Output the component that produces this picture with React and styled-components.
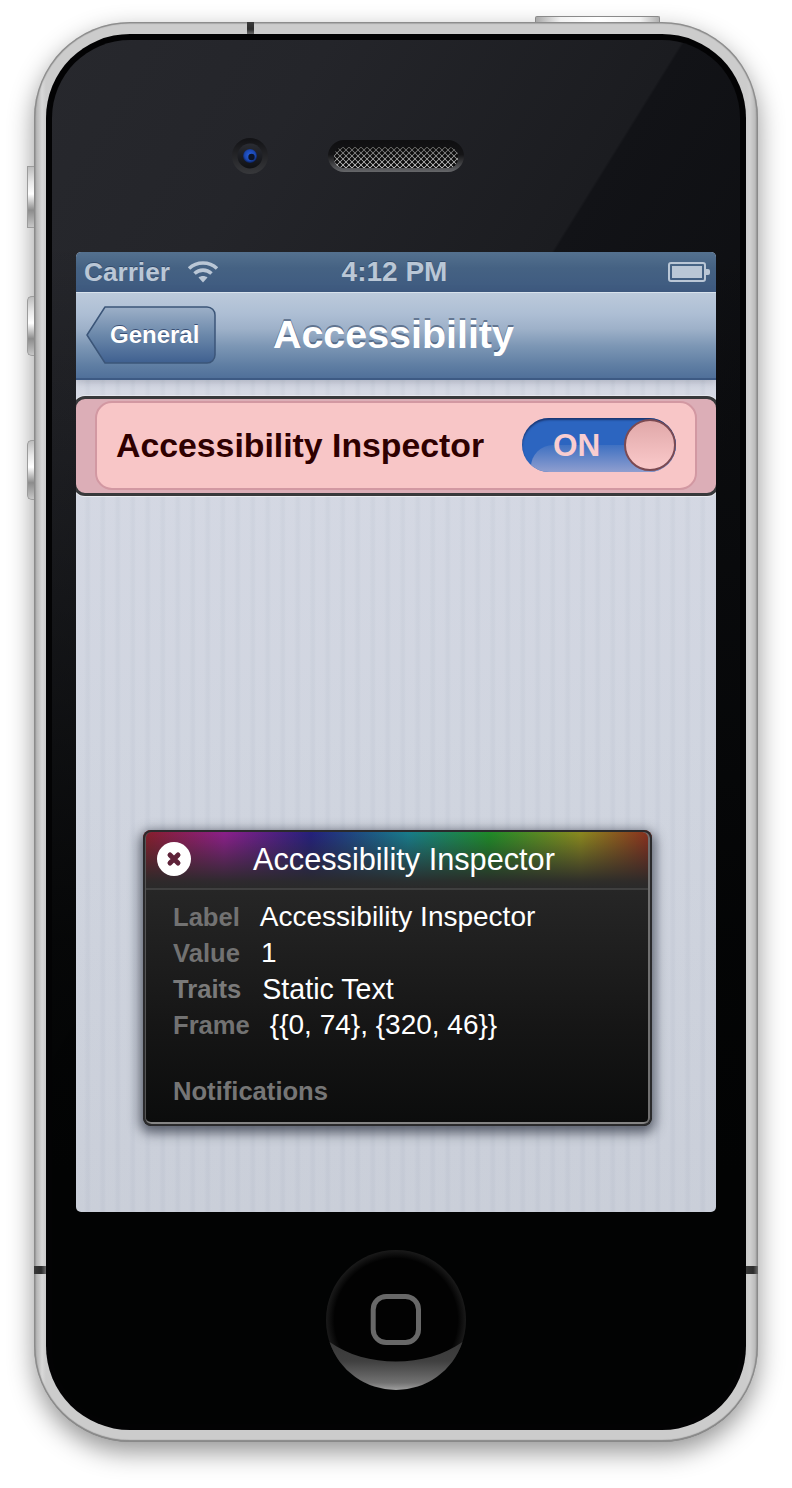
import React from "react";
import styled, { createGlobalStyle } from "styled-components";

const Global = createGlobalStyle`
  html, body { margin: 0; padding: 0; background: #fff; }
  body { font-family: "Liberation Sans", Arial, sans-serif; }
  #root { width: 792px; height: 1488px; overflow: hidden; }
`;

const Page = styled.div`
  width: 792px;
  height: 1488px;
  padding: 22px 34px 46px;
  box-sizing: border-box;
  background: #fff;
`;

const Body = styled.div`
  position: relative;
  width: 724px;
  height: 1420px;
  box-sizing: border-box;
  padding: 12px;
  border-radius: 96px;
  background: linear-gradient(90deg, #a8a8a8 0, #c4c4c4 5px, #d8d8d8 8px, #cccccc 12px, #cccccc 712px, #d0d0d0 716px, #bcbcbc 721px, #a0a0a0 724px);
  box-shadow: 0 10px 26px rgba(0, 0, 0, 0.42), inset 0 0 1px 1.5px #8a8a8a, inset 0 -2px 1px #8c8c8c;
`;

const Band = styled.div`
  position: absolute;
  background: linear-gradient(${(p) => (p.$v ? "90deg" : "180deg")}, #3a3a3a, #2c2c2c 60%, #6a6a6a);
  ${(p) => p.$css}
`;

const SideButton = styled.div`
  position: absolute;
  left: -7px;
  top: ${(p) => p.$top}px;
  width: 7px;
  height: ${(p) => p.$h}px;
  box-sizing: border-box;
  border: 1px solid #9c9c9c;
  border-right: none;
  border-radius: ${(p) => (p.$round ? "5px 0 0 5px" : "0")};
  background: linear-gradient(180deg, #bdbdbd 0, #e8e8e8 25%, #ffffff 45%, #8c8c8c 72%, #c6c6c6 100%);
`;

const TopButton = styled.div`
  position: absolute;
  top: -6px;
  left: 501px;
  width: 125px;
  height: 6px;
  box-sizing: border-box;
  border: 1px solid #8a8a8a;
  border-bottom: none;
  border-radius: 2px 2px 0 0;
  background: linear-gradient(90deg, #a8a8a8, #f2f2f2 20%, #ffffff 50%, #f0f0f0 85%, #b0b0b0);
`;

const Bezel = styled.div`
  width: 700px;
  height: 1396px;
  box-sizing: border-box;
  padding: 6px;
  border-radius: 84px;
  background: #030304;
`;

const Glass = styled.div`
  width: 688px;
  height: 1384px;
  border-radius: 78px;
  overflow: hidden;
  display: flex;
  flex-direction: column;
  background:
    linear-gradient(180deg, rgba(2, 3, 3, 0) 0, rgba(2, 3, 3, 0) 200px, rgba(2, 3, 3, 0.3) 480px, rgba(2, 3, 3, 0.85) 900px, #020303 1130px),
    linear-gradient(121.8deg, #27282d 0, #24252a 18%, #1b1c20 40.8%, #121317 41%, #0d0e11 60%);
`;

const TopZone = styled.div`
  height: 212px;
  box-sizing: border-box;
  padding: 98px 0 0 180px;
  display: flex;
  align-items: flex-start;
  gap: 60px;
`;

const Camera = styled.svg`
  display: block;
  width: 36px;
  height: 36px;
  flex: none;
`;

const Speaker = styled.div`
  width: 136px;
  height: 32px;
  margin-top: 2px;
  box-sizing: border-box;
  padding: 7px 6px 4px;
  border-radius: 16px;
  background: linear-gradient(180deg, #0f0f11 0, #141416 45%, #66676a 100%);
  flex: none;
`;

const Mesh = styled.div`
  height: 21px;
  border-radius: 9px;
  background-color: #9c9c9c;
  background-image:
    radial-gradient(circle at center, #0c0c0c 0, #0c0c0c 1.5px, transparent 2px),
    radial-gradient(circle at center, #0c0c0c 0, #0c0c0c 1.5px, transparent 2px),
    linear-gradient(180deg, #5c5c5c, #b8b8b8);
  background-size: 6px 6px, 6px 6px, 100% 100%;
  background-position: 0 0, 3px 3px, 0 0;
`;

const Screen = styled.div`
  width: 640px;
  height: 960px;
  margin-left: 24px;
  border-radius: 5px;
  overflow: hidden;
  display: flex;
  flex-direction: column;
  flex: none;
  background:
    repeating-linear-gradient(90deg, rgba(255,255,255,0.035) 0, rgba(255,255,255,0.035) 8px, rgba(120,130,150,0.045) 11px, rgba(120,130,150,0.045) 13px, rgba(255,255,255,0.035) 15px),
    linear-gradient(180deg, #d6dae5 0, #cfd4df 50%, #c8cdd8 100%);
`;

const StatusBar = styled.div`
  height: 40px;
  flex: none;
  display: grid;
  grid-template-columns: 1fr auto 1fr;
  align-items: center;
  padding: 0 6px 0 8px;
  color: #bac7d6;
  font-weight: 700;
  background: linear-gradient(180deg, #54718f 0, #456283 40%, #3e5a80 100%);
`;

const StatusLeft = styled.div`
  display: flex;
  align-items: center;
  gap: 17px;
`;

const StatusText = styled.span`
  font-size: ${(p) => p.$size}px;
  line-height: 40px;
  margin-right: ${(p) => p.$shift || 0}px;
  text-shadow: 0 -1px 0 rgba(30, 50, 80, 0.5);
`;

const StatusRight = styled.div`
  display: flex;
  justify-content: flex-end;
`;

const NavBar = styled.div`
  height: 88px;
  flex: none;
  box-sizing: border-box;
  padding-left: 10px;
  display: flex;
  align-items: center;
  gap: 57px;
  border-top: 1px solid #d8e2ec;
  border-bottom: 2px solid #3d5a84;
  background: linear-gradient(180deg, #bccadb 0, #adbed4 25%, #9eb1c9 42%, #7d97b5 62%, #5f7ea3 85%, #50709a 100%);
  box-shadow: 0 2px 8px rgba(60, 70, 90, 0.28);
`;

const BackButton = styled.div`
  position: relative;
  width: 130px;
  height: 58px;
  margin-top: -1px;
  flex: none;
  display: flex;
  align-items: center;
  padding-left: 24px;
  box-sizing: border-box;
  color: #fff;
  font-size: 24px;
  font-weight: 700;
`;

const BackShape = styled.svg`
  position: absolute;
  left: 0;
  top: 0;
  width: 130px;
  height: 58px;
`;

const BackLabel = styled.span`
  position: relative;
  text-shadow: 0 -1px 0 rgba(30, 50, 90, 0.7);
`;

const Title = styled.div`
  color: #fff;
  font-size: 39.4px;
  font-weight: 700;
  margin-top: -2px;
  text-shadow: 0 -2px 0 rgba(60, 80, 110, 0.65);
`;

const Content = styled.div`
  flex: 1;
  padding-top: 16px;
  position: relative;
`;

const Highlight = styled.div`
  height: 100px;
  box-sizing: border-box;
  border: 3px solid #38393b;
  border-radius: 12px;
  margin: 0 -3px;
  padding: 2px 19px 3px 19px;
  background: #dcaeb7;
  box-shadow: 0 1px 0 rgba(255, 255, 255, 0.55), 0 -1px 0 rgba(255, 255, 255, 0.4);
`;

const Cell = styled.div`
  height: 100%;
  box-sizing: border-box;
  border: 2px solid #d298a2;
  border-radius: 17px;
  display: flex;
  align-items: center;
  justify-content: space-between;
  padding: 0 19px;
  background: #f8c6c7;
`;

const CellLabel = styled.div`
  color: #2f0000;
  font-size: 33.8px;
  font-weight: 700;
`;

const Switch = styled.div`
  position: relative;
  width: 154px;
  height: 54px;
  margin-top: -1px;
  box-sizing: border-box;
  border-radius: 27px;
  overflow: hidden;
  display: flex;
  align-items: center;
  padding-left: 31px;
  background: #2c65c0;
  box-shadow: inset 0 2px 2px rgba(20, 40, 90, 0.75);
`;

const SwitchGloss = styled.div`
  position: absolute;
  left: 9px;
  right: 0;
  top: 27px;
  bottom: 0;
  border-radius: 22px 0 0 0;
  background: linear-gradient(180deg, #3f71c2, #8f9ecf);
`;

const SwitchText = styled.span`
  position: relative;
  color: #f9cdd0;
  font-size: 31.5px;
  font-weight: 700;
`;

const Knob = styled.div`
  position: absolute;
  right: 0;
  top: 1px;
  width: 52px;
  height: 52px;
  box-sizing: border-box;
  border: 2px solid #7b4a52;
  border-radius: 50%;
  background: linear-gradient(180deg, #e0a8a9 0, #f8c6c7 90%);
`;

const Inspector = styled.div`
  position: absolute;
  left: 67px;
  top: 450px;
  width: 509px;
  height: 296px;
  box-sizing: border-box;
  border-radius: 8px;
  overflow: hidden;
  background: linear-gradient(180deg, #2c2c2c 0, #262626 20%, #161616 65%, #0b0c0c 100%);
  box-shadow: 0 4px 12px 3px rgba(40, 45, 60, 0.7);

  &::after {
    content: "";
    position: absolute;
    inset: 0;
    box-sizing: border-box;
    border-radius: 8px;
    border: 2px solid #2a2a2c;
    box-shadow: inset 1px 0 0 #555, inset -2px 0 0 #707070, inset 0 -2px 0 #858585;
    pointer-events: none;
  }
`;

const InspectorHead = styled.div`
  height: 60px;
  box-sizing: border-box;
  display: flex;
  align-items: center;
  padding-left: 13px;
  gap: 61px;
  color: #fff;
  font-size: 30.7px;
  border-bottom: 2px solid #3f3f3f;
  background:
    linear-gradient(180deg, rgba(42, 42, 42, 0) 0, rgba(42, 42, 42, 0.2) 20%, rgba(42, 42, 42, 0.95) 88%, #2a2a2a 100%),
    linear-gradient(90deg, #8a1e28 0, #8f1f8e 16%, #24207f 33%, #177f8f 52%, #1e8e28 68%, #8f8c1e 86%, #8c2a1e 100%);
`;

const CloseIcon = styled.svg`
  display: block;
  width: 36px;
  height: 36px;
  flex: none;
`;

const HeadTitle = styled.span`
  margin-top: 2px;
`;

const InspectorBody = styled.div`
  padding: 9px 0 0 30px;
`;

const Row = styled.div`
  display: flex;
  align-items: center;
  gap: ${(p) => p.$gap}px;
  height: 36px;
`;

const Key = styled.span`
  color: ${(p) => p.$c || "#727272"};
  font-size: 25.6px;
  font-weight: 700;
`;

const Val = styled.span`
  color: #fff;
  font-size: ${(p) => p.$size || 28}px;
`;

const Notifications = styled.div`
  margin-top: 30px;
  height: 36px;
  line-height: 36px;
  color: #767676;
  font-size: 25.6px;
  font-weight: 700;
`;

const BottomZone = styled.div`
  flex: 1;
  display: flex;
  justify-content: center;
  padding-top: 38px;
`;

const Home = styled.svg`
  display: block;
  width: 140px;
  height: 140px;
`;

const Wifi = () => (
  <svg width="32" height="24" viewBox="0 0 32 24" style={{ display: "block" }}>
    <g fill="none" stroke="#bac7d6" strokeWidth="3.6">
      <path d="M2 8.5C10 1.2 22 1.2 30 8.5" />
      <path d="M7.5 13.5C12.5 9 19.5 9 24.5 13.5" />
    </g>
    <path d="M11.5 17.6C14 15.6 18 15.6 20.5 17.6L16 22.5Z" fill="#bac7d6" />
  </svg>
);

const Battery = () => (
  <svg width="42" height="20" viewBox="0 0 42 20" style={{ display: "block" }}>
    <rect x="1" y="1" width="36" height="18" rx="2" fill="none" stroke="#bac7d6" strokeWidth="2" />
    <rect x="4" y="4" width="30" height="12" fill="#bac7d6" />
    <path d="M38 7h2a2 2 0 0 1 2 2v2a2 2 0 0 1-2 2h-2Z" fill="#bac7d6" />
  </svg>
);

export default function App() {
  return (
    <Page>
      <Global />
      <Body>
        <TopButton />
        <SideButton $top={144} $h={62} />
        <SideButton $top={274} $h={60} $round />
        <SideButton $top={418} $h={60} $round />
        <Band $css="left:213px;top:0;width:7px;height:12px;" />
        <Band $v $css="left:0;top:1244px;width:12px;height:8px;" />
        <Band $v $css="right:0;top:1244px;width:12px;height:8px;" />
        <Bezel>
          <Glass>
            <TopZone>
              <Camera viewBox="0 0 36 36">
                <defs>
                  <linearGradient id="camRim" x1="0" y1="0" x2="0" y2="1">
                    <stop offset="0" stopColor="#121215" />
                    <stop offset="1" stopColor="#37383b" />
                  </linearGradient>
                  <linearGradient id="camCore" x1="0" y1="0" x2="0" y2="1">
                    <stop offset="0" stopColor="#2a2c33" />
                    <stop offset="1" stopColor="#101114" />
                  </linearGradient>
                  <radialGradient id="camLens" cx="0.5" cy="0.45" r="0.55">
                    <stop offset="0" stopColor="#2a62e0" />
                    <stop offset="0.7" stopColor="#1a46ae" />
                    <stop offset="1" stopColor="#0c1d50" />
                  </radialGradient>
                </defs>
                <circle cx="18" cy="18" r="18" fill="url(#camRim)" />
                <circle cx="18" cy="18" r="12.5" fill="url(#camCore)" />
                <circle cx="18" cy="18" r="7" fill="url(#camLens)" />
                <circle cx="19.5" cy="19" r="3.2" fill="#0b1428" />
              </Camera>
              <Speaker>
                <Mesh />
              </Speaker>
            </TopZone>
            <Screen>
              <StatusBar>
                <StatusLeft>
                  <StatusText $size={26.2}>Carrier</StatusText>
                  <Wifi />
                </StatusLeft>
                <StatusText $size={28} $shift={5}>4:12 PM</StatusText>
                <StatusRight>
                  <Battery />
                </StatusRight>
              </StatusBar>
              <NavBar>
                <BackButton>
                  <BackShape viewBox="0 0 130 58">
                    <defs>
                      <linearGradient id="backFill" x1="0" y1="0" x2="0" y2="1">
                        <stop offset="0" stopColor="#9db0c8" />
                        <stop offset="0.5" stopColor="#6b88aa" />
                        <stop offset="1" stopColor="#3f6090" />
                      </linearGradient>
                    </defs>
                    <path
                      d="M19 1H121a8 8 0 0 1 8 8V49a8 8 0 0 1-8 8H19L1 29Z"
                      fill="url(#backFill)"
                      stroke="#3b5578"
                      strokeWidth="1.5"
                      strokeLinejoin="round"
                    />
                  </BackShape>
                  <BackLabel>General</BackLabel>
                </BackButton>
                <Title>Accessibility</Title>
              </NavBar>
              <Content>
                <Highlight>
                  <Cell>
                    <CellLabel>Accessibility Inspector</CellLabel>
                    <Switch>
                      <SwitchGloss />
                      <SwitchText>ON</SwitchText>
                      <Knob />
                    </Switch>
                  </Cell>
                </Highlight>
                <Inspector>
                  <InspectorHead>
                    <CloseIcon viewBox="0 0 36 36">
                      <circle cx="18" cy="18" r="17" fill="#fff" />
                      <path d="M14 14L22 22M22 14L14 22" stroke="#5e2238" strokeWidth="5" strokeLinecap="round" />
                    </CloseIcon>
                    <HeadTitle>Accessibility Inspector</HeadTitle>
                  </InspectorHead>
                  <InspectorBody>
                    <Row $gap={20}><Key>Label</Key><Val>Accessibility Inspector</Val></Row>
                    <Row $gap={21}><Key>Value</Key><Val>1</Val></Row>
                    <Row $gap={21}><Key $c="#7a7a7a">Traits</Key><Val $size={28.6}>Static Text</Val></Row>
                    <Row $gap={20}><Key>Frame</Key><Val>{"{{0, 74}, {320, 46}}"}</Val></Row>
                    <Notifications>Notifications</Notifications>
                  </InspectorBody>
                </Inspector>
              </Content>
            </Screen>
            <BottomZone>
              <Home viewBox="0 0 140 140">
                <defs>
                  <radialGradient id="homeRim" cx="0.5" cy="0.5" r="0.5">
                    <stop offset="0.88" stopColor="#020202" />
                    <stop offset="1" stopColor="#1a1a1a" />
                  </radialGradient>
                  <linearGradient id="homeGlow" x1="0" y1="0" x2="0" y2="1">
                    <stop offset="0" stopColor="#383838" />
                    <stop offset="0.4" stopColor="#404040" />
                    <stop offset="0.85" stopColor="#727272" />
                    <stop offset="1" stopColor="#a0a0a0" />
                  </linearGradient>
                </defs>
                <circle cx="70" cy="70" r="70" fill="url(#homeRim)" />
                <path d="M3.55 92C40 118 100 118 136.45 92A70 70 0 0 1 3.55 92Z" fill="url(#homeGlow)" />
                <rect x="47.2" y="46.5" width="45.3" height="46" rx="13" fill="none" stroke="#686868" strokeWidth="5" />
              </Home>
            </BottomZone>
          </Glass>
        </Bezel>
      </Body>
    </Page>
  );
}
